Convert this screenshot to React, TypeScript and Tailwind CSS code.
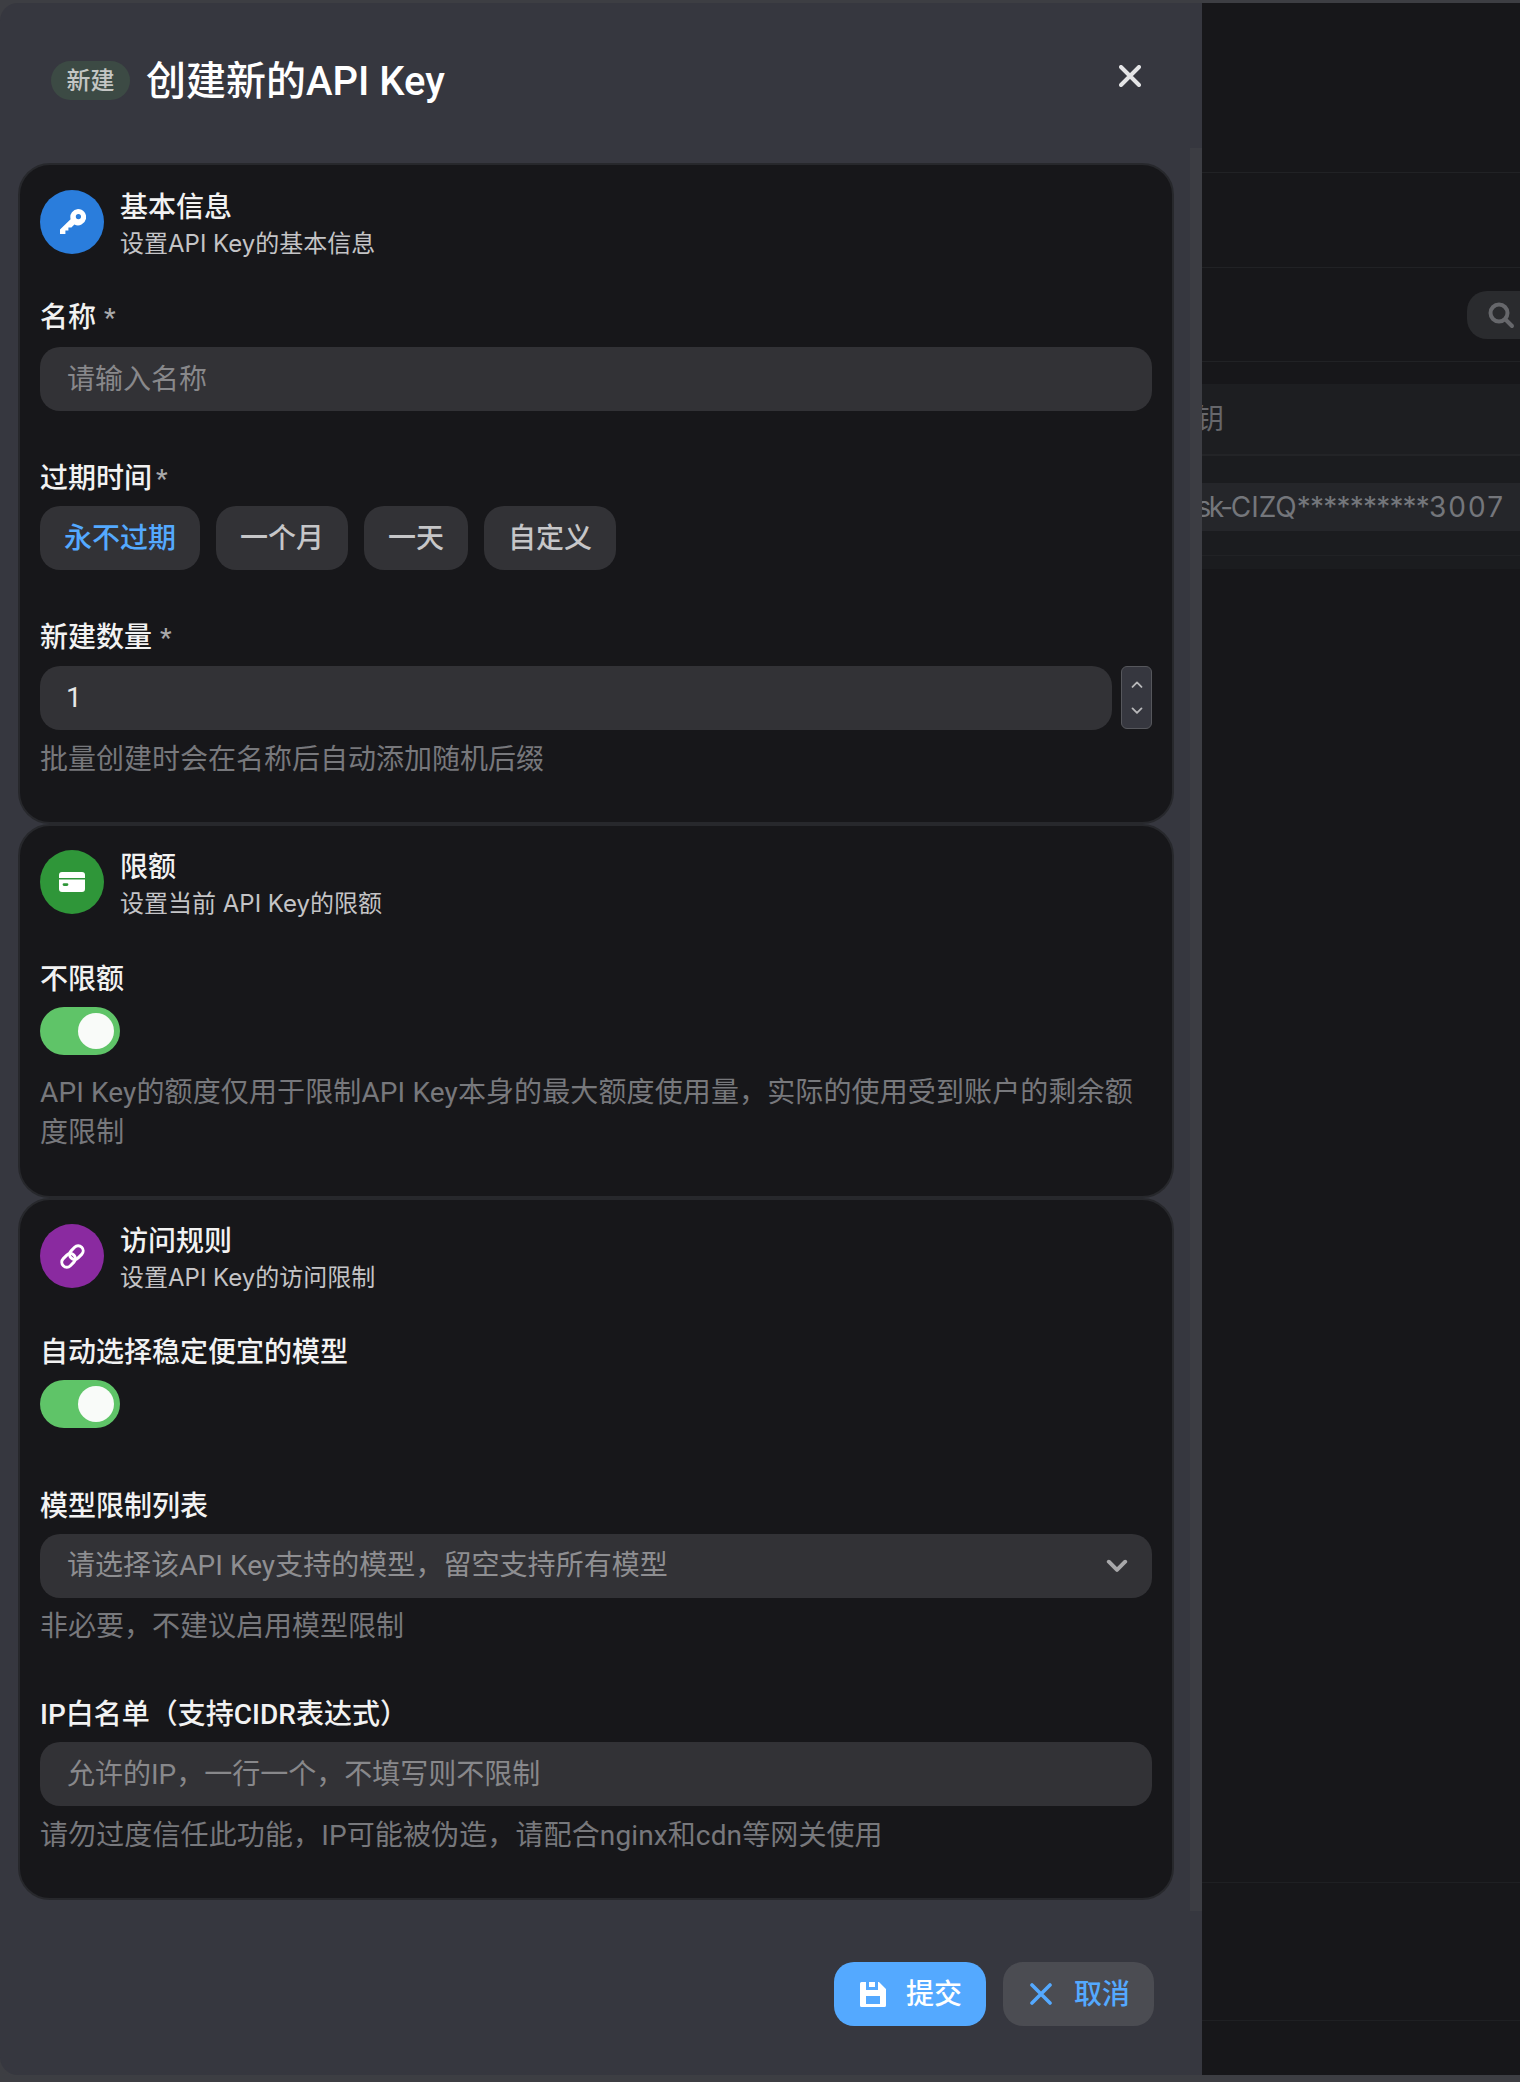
import React from "react";

const fieldClass =
  "w-full h-16 rounded-[20px] bg-[#323236] px-[27px] text-[28px] text-[#e8e8e8] outline-none placeholder:text-[#88888b]";

function Label({ text, star, starGap = "ml-[8px]", className = "" }: { text: string; star?: boolean; starGap?: string; className?: string }) {
  return (
    <div className={`h-10 leading-10 text-[28px] font-medium text-[#f2f2f2] ${className}`}>
      {text}
      {star && <span className={`${starGap} text-[26px] text-[#a8a8aa]`}>*</span>}
    </div>
  );
}

function Help({ children, className = "", leading = "leading-[41px]" }: { children: React.ReactNode; className?: string; leading?: string }) {
  return <div className={`text-[28px] text-[#77787c] ${leading} ${className}`}>{children}</div>;
}

function Section({
  color,
  icon,
  title,
  sub,
  children,
  className,
}: {
  color: string;
  icon: React.ReactNode;
  title: string;
  sub: string;
  children: React.ReactNode;
  className: string;
}) {
  return (
    <section className={`rounded-[32px] border-2 border-[#27282c] bg-[#17171a] px-5 ${className}`}>
      <div className="flex h-16 gap-4">
        <div className={`flex h-16 w-16 shrink-0 items-center justify-center rounded-full ${color}`}>{icon}</div>
        <div>
          <div className="mt-[-2px] text-[28px] leading-10 font-medium text-[#f2f2f2]">{title}</div>
          <div className="mt-[-2px] font-['Inter','Noto_Sans_CJK_SC',sans-serif] text-[24px] leading-[36px] text-[#c4c4c6]">{sub}</div>
        </div>
      </div>
      {children}
    </section>
  );
}

function Switch() {
  return (
    <div className="flex h-12 w-20 items-center justify-end rounded-[24px] bg-[#5fc468] pr-[6px]">
      <div className="h-9 w-9 rounded-full bg-[#f9fbf9]" />
    </div>
  );
}

function KeyIcon() {
  return (
    <svg width="26" height="26" viewBox="0 0 26 26" className="ml-[1px]">
      <path
        fillRule="evenodd"
        fill="#fff"
        d="M18 0a8.2 8.2 0 1 1-3.6 15.6l-3 3h-3v3h-3v3.4H0v-4.6l10.6-10.2A8.2 8.2 0 0 1 18 0Zm.4 5a2.6 2.6 0 1 0 0 5.2 2.6 2.6 0 0 0 0-5.2Z"
      />
    </svg>
  );
}

function CardIcon() {
  return (
    <svg width="26" height="20" viewBox="0 0 26 20">
      <path fill="#fff" d="M3 0h20a3 3 0 0 1 3 3v3H0V3a3 3 0 0 1 3-3Z" />
      <path
        fillRule="evenodd"
        fill="#fff"
        d="M0 7.5h26V17a3 3 0 0 1-3 3H3a3 3 0 0 1-3-3V7.5Zm5 3.7a1.4 1.4 0 0 0 0 2.8h3a1.4 1.4 0 0 0 0-2.8H5Z"
      />
    </svg>
  );
}

function LinkIcon() {
  return (
    <svg width="27" height="27" viewBox="0 0 27 27" fill="none" stroke="#fff" strokeWidth="3">
      <g transform="rotate(-45 13.5 13.5)">
        <rect x="0.5" y="8.5" width="15" height="10" rx="5" />
        <rect x="11.5" y="8.5" width="15" height="10" rx="5" />
      </g>
    </svg>
  );
}

function SaveIcon() {
  return (
    <svg width="26" height="25" viewBox="0 0 26 25" className="ml-[2px]">
      <path
        fillRule="evenodd"
        fill="#fff"
        d="M1.5 0H19l7 7v16.5a1.5 1.5 0 0 1-1.5 1.5h-23A1.5 1.5 0 0 1 0 23.500V1.500A1.500 1.500 0 0 1 1.500 0ZM6 0v8h12V0h-3v5H9V0H6Zm0 14v8h14v-8H6Z"
      />
    </svg>
  );
}

function Cross({ size, color, width }: { size: number; color: string; width: number }) {
  return (
    <svg width={size} height={size} viewBox="0 0 22 22" fill="none" stroke={color} strokeWidth={width} strokeLinecap="round">
      <path d="M2 2l18 18M20 2L2 20" />
    </svg>
  );
}

function Chevron({ up, size, color, width }: { up?: boolean; size: number; color: string; width: number }) {
  return (
    <svg width={size} height={size * 0.62} viewBox="0 0 16 10" fill="none" stroke={color} strokeWidth={width} strokeLinecap="round" strokeLinejoin="round">
      <path d={up ? "M2 8l6-6 6 6" : "M2 2l6 6 6-6"} />
    </svg>
  );
}

function Choice({ text, active, w }: { text: string; active?: boolean; w: string }) {
  return (
    <div
      className={`flex h-16 items-center justify-center rounded-[20px] bg-[#323236] pt-[2px] text-[28px] font-medium ${w} ${
        active ? "text-[#54a9ff]" : "text-[#c6c6c8]"
      }`}
    >
      {text}
    </div>
  );
}

export default function App() {
  return (
    <div className="flex h-[2082px] w-[1520px] overflow-hidden bg-[#3d3e43] pt-[3px] pb-[7px] font-['Roboto','Noto_Sans_CJK_SC',sans-serif]">
      {/* drawer */}
      <div className="relative flex w-[1202px] shrink-0 flex-col rounded-l-[18px] bg-[#36373f]">
        <header className="flex h-[160px] shrink-0 items-start pt-[58px] pr-[61px] pl-[51px]">
          <div className="flex h-[39px] w-[79px] items-center justify-center rounded-full bg-[#3c4a44] text-[24px] font-medium text-[#c4c6c4]">
            新建
          </div>
          <div className="mt-[-4px] ml-4 text-[40px] leading-[50px] font-medium text-white">创建新的API Key</div>
          <div className="mt-[4px] ml-auto">
            <Cross size={22} color="#e4e4e6" width={4} />
          </div>
        </header>

        <div className="flex w-[1174px] flex-col pl-[18px]">
          <Section
            color="bg-[#2a7ddc]"
            icon={<KeyIcon />}
            title="基本信息"
            sub="设置API Key的基本信息"
            className="h-[661px] pt-[25px]"
          >
            <Label text="名称" star className="mt-[44px]" />
            <input readOnly placeholder="请输入名称" className={`${fieldClass} mt-[9px] block`} />
            <Label text="过期时间" star starGap="ml-[4px]" className="mt-[48px]" />
            <div className="mt-[7px] flex gap-4">
              <Choice text="永不过期" active w="w-[160px]" />
              <Choice text="一个月" w="w-[132px]" />
              <Choice text="一天" w="w-[104px]" />
              <Choice text="自定义" w="w-[132px]" />
            </div>
            <Label text="新建数量" star className="mt-[48px]" />
            <div className="mt-[8px] flex gap-[9px]">
              <div className="flex h-16 flex-1 items-center rounded-[20px] bg-[#323236] pl-[26px] text-[28px] text-[#e8e8e8]">1</div>
              <div className="flex h-[63px] w-[31px] flex-col items-center justify-center gap-[19px] rounded-[6px] border border-[#56575c] bg-[#36373f]">
                <Chevron up size={12} color="#b8b8ba" width={2.4} />
                <Chevron size={12} color="#b8b8ba" width={2.4} />
              </div>
            </div>
            <Help className="mt-[9px]">批量创建时会在名称后自动添加随机后缀</Help>
          </Section>

          <Section
            color="bg-[#2f9639]"
            icon={<CardIcon />}
            title="限额"
            sub="设置当前 API Key的限额"
            className="h-[374px] pt-[24px]"
          >
            <Label text="不限额" className="mt-[46px]" />
            <div className="mt-[7px]">
              <Switch />
            </div>
            <Help leading="leading-[40px]" className="mt-[18px] tracking-[0.12px]">
              API Key的额度仅用于限制API Key本身的最大额度使用量，实际的使用受到账户的剩余额度限制
            </Help>
          </Section>

          <Section
            color="bg-[#8a2aa0]"
            icon={<LinkIcon />}
            title="访问规则"
            sub="设置API Key的访问限制"
            className="h-[702px] pt-[24px]"
          >
            <Label text="自动选择稳定便宜的模型" className="mt-[45px]" />
            <div className="mt-[7px]">
              <Switch />
            </div>
            <Label text="模型限制列表" className="mt-[59px]" />
            <div className="mt-[7px] flex h-16 items-center justify-between rounded-[20px] bg-[#323236] pr-[24px] pl-[27px] text-[28px] tracking-[0.05px] text-[#8e8e91]">
              <span>请选择该API Key支持的模型，留空支持所有模型</span>
              <Chevron size={22} color="#a8a8aa" width={2.9} />
            </div>
            <Help className="mt-[8px]">非必要，不建议启用模型限制</Help>
            <Label text="IP白名单（支持CIDR表达式）" className="mt-[48px]" />
            <input readOnly placeholder="允许的IP，一行一个，不填写则不限制" className={`${fieldClass} mt-[7px] block`} />
            <Help className="mt-[9px] tracking-[0.12px]">请勿过度信任此功能，IP可能被伪造，请配合nginx和cdn等网关使用</Help>
          </Section>
        </div>

        <footer className="flex justify-end gap-[17px] pt-[62px] pr-[48px]">
          <div className="flex h-16 w-[152px] items-center justify-center gap-[20px] rounded-[20px] bg-[#54a9ff] text-[28px] font-medium text-white">
            <SaveIcon />
            <span className="pt-[2px]">提交</span>
          </div>
          <div className="flex h-16 w-[151px] items-center justify-center gap-[22px] rounded-[20px] bg-[#4b4c52] pl-[3px] text-[28px] font-medium text-[#54a9ff]">
            <Cross size={22} color="#54a9ff" width={3.6} />
            <span className="pt-[2px]">取消</span>
          </div>
        </footer>

        {/* scrollbar */}
        <div className="absolute top-[145px] left-[1190px] h-[1763px] w-3 bg-[#3c3d43]" />
      </div>

      {/* page behind the drawer */}
      <div className="min-w-0 flex-1 overflow-hidden bg-[#17171a] font-['Inter','Noto_Sans_CJK_SC',sans-serif]">
        <div className="h-[170px] border-b border-[#212225]" />
        <div className="h-[95px] border-b border-[#212225]" />
        <div className="flex h-[94px] items-center justify-end border-b border-[#212225]">
          <div className="mr-[-20px] flex h-12 w-[73px] items-center rounded-[20px] bg-[#2a2b2e] pl-[20px]">
            <svg width="28" height="28" viewBox="0 0 28 28" fill="none" stroke="#66676b" strokeWidth="4" strokeLinecap="round">
              <circle cx="12" cy="12" r="8.500" />
              <path d="M19 19l6 6" />
            </svg>
          </div>
        </div>
        <div className="mt-[22px] flex h-[72px] items-center border-b-2 border-[#232427] bg-[#1d1e21] text-[28px] text-[#66676b]">
          <span className="ml-[-6px]">钥</span>
        </div>
        <div className="h-[27px] bg-[#1b1c1f]" />
        <div className="flex h-12 items-center justify-end bg-[#25262a] pr-[15px] text-[28px] whitespace-nowrap text-[#74767b]">
          <span className="tracking-[-2.5px]">sk-</span>
          <span>CIZQ</span>
          <span className="tracking-[-0.8px]">**********</span>
          <span className="tracking-[2px]">3007</span>
        </div>
        <div className="h-[25px] border-b border-[#212225] bg-[#1b1c1f]" />
        <div className="h-[13px] bg-[#1b1c1f]" />
        <div className="h-[1314px] border-b border-[#1f2023]" />
        <div className="h-[138px] border-b border-[#1f2023]" />
      </div>
    </div>
  );
}
